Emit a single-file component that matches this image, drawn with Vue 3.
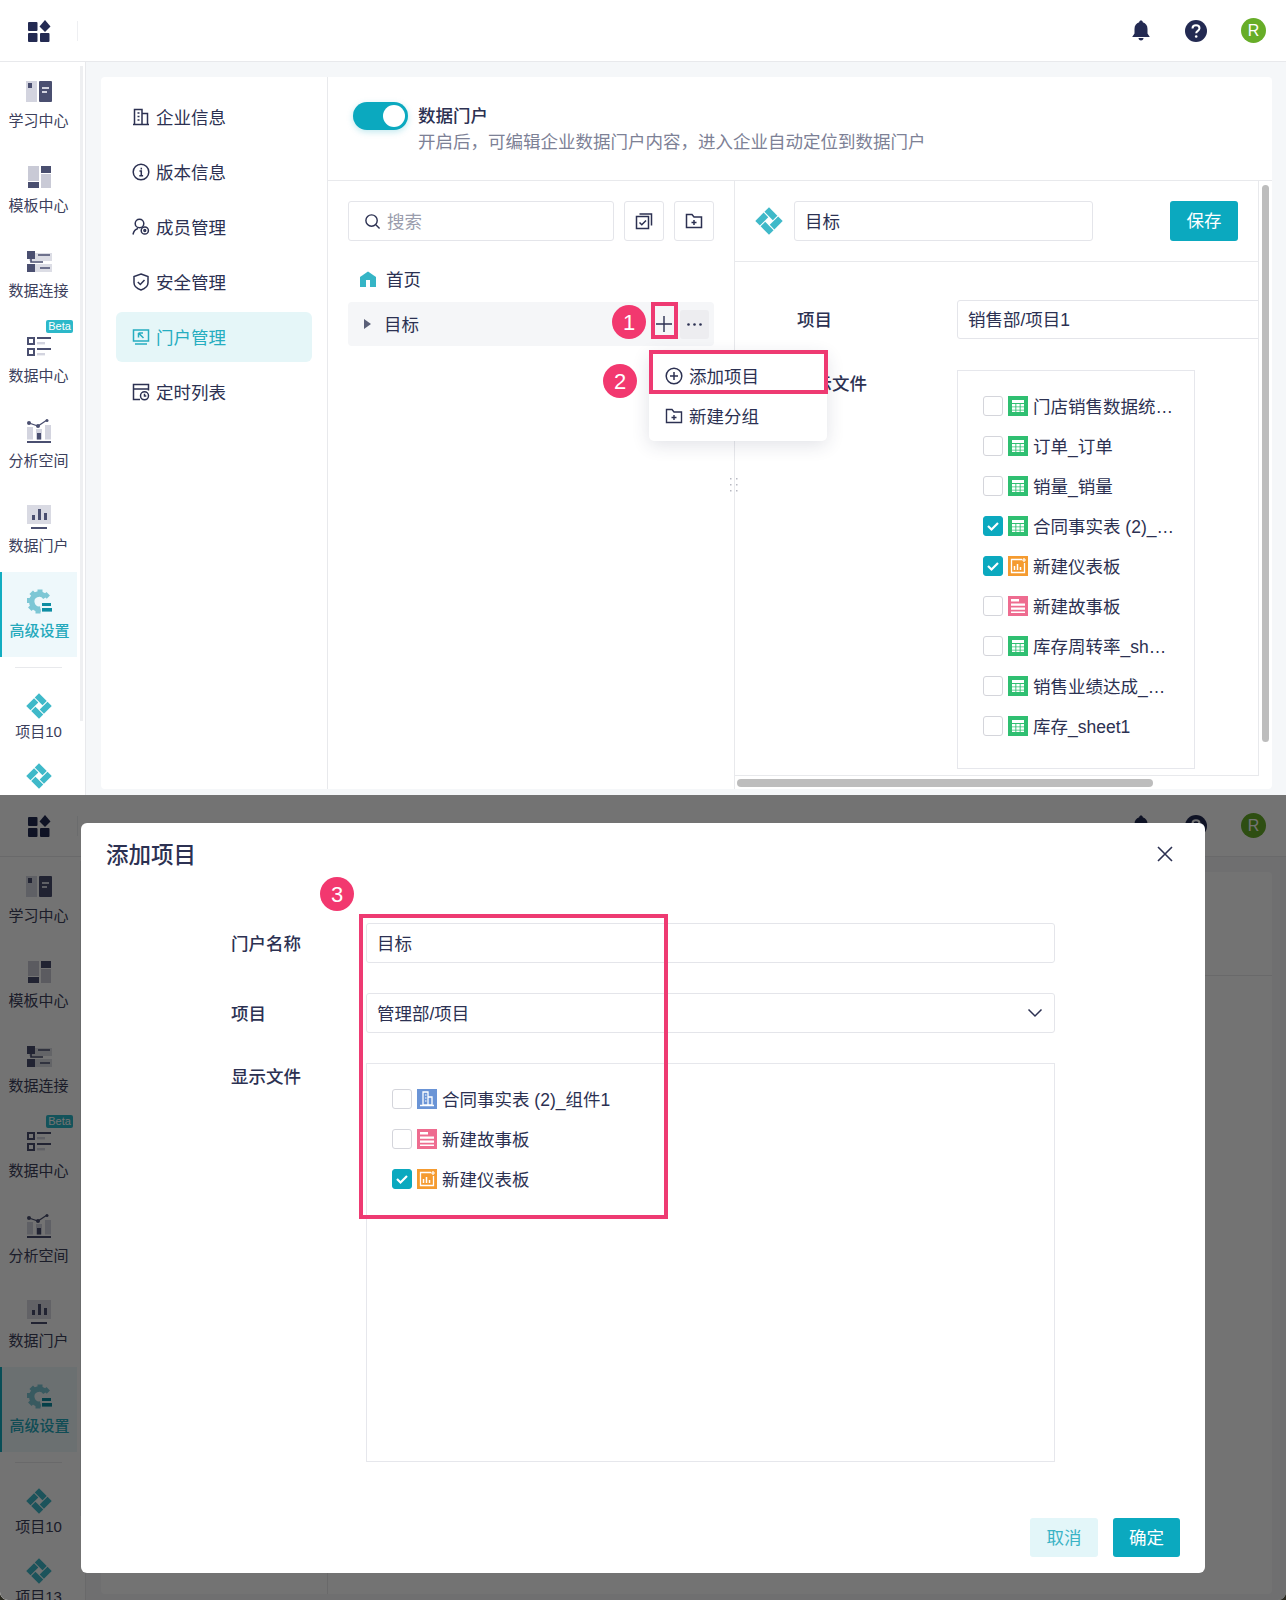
<script setup>
const shots = ["portal", "dialog"];

const diamond = `<g transform="rotate(45 13 13)" fill="currentColor"><rect x="4" y="4" width="11" height="6"/><rect x="16" y="4" width="6" height="11"/><rect x="11" y="16" width="11" height="6"/><rect x="4" y="11" width="6" height="11"/></g>`;

const gearTeeth = [0, 45, 315, 270, 225, 180]
	.map((a) => `<rect x="10.500" y="0.500" width="5" height="4.500" transform="rotate(${a} 12 12.500)"/>`)
	.join("");

const sideIcons = {
	learn: `<rect y="2" width="11" height="21" fill="#d3d4df"/><rect x="2" y="4" width="4" height="5" fill="#4a4f70"/><rect x="13" y="2" width="13" height="21" rx="1" fill="#4a4f70"/><rect x="16" y="8" width="7" height="2" fill="#d3d4df"/><rect x="16" y="12" width="5" height="2" fill="#d3d4df"/>`,
	tpl: `<rect x="2" y="2" width="11" height="15" fill="#c9cad6"/><rect x="2" y="18" width="11" height="6" fill="#4a4f70"/><rect x="15" y="2" width="10" height="7" fill="#4a4f70"/><rect x="15" y="10" width="10" height="14" fill="#c9cad6"/>`,
	conn: `<rect x="3" y="4" width="23" height="8" fill="#dcdde5"/><rect x="3" y="15" width="23" height="8" fill="#dcdde5"/><rect x="1" y="2" width="8" height="8" fill="#4a4f70"/><rect x="1" y="15" width="8" height="8" fill="#4a4f70"/><path d="M5 9v4h12M12 6h12M14 19h10" stroke="#4a4f70" stroke-width="1.600" fill="none"/>`,
	data: `<rect x="2" y="4" width="6" height="6" fill="none" stroke="#4a4f70" stroke-width="2"/><rect x="2" y="15" width="6" height="6" fill="none" stroke="#4a4f70" stroke-width="2"/><rect x="11" y="3" width="14" height="2" fill="#4a4f70"/><rect x="11" y="8" width="8" height="2.400" fill="#d3d4df"/><rect x="11" y="14" width="14" height="2" fill="#4a4f70"/><rect x="11" y="19" width="8" height="2.400" fill="#d3d4df"/>`,
	analysis: `<rect x="1" y="8" width="6" height="12.500" fill="#d3d4df"/><rect x="10" y="10" width="6" height="10.500" fill="#d3d4df"/><rect x="19" y="6" width="6" height="14.500" fill="#d3d4df"/><rect x="11" y="14" width="4" height="6.500" fill="#4a4f70"/><path d="M3 4l9 3 9-6" stroke="#4a4f70" stroke-width="1.200" fill="none"/><circle cx="3" cy="4" r="2" fill="#4a4f70"/><circle cx="12" cy="7" r="2" fill="#4a4f70"/><circle cx="21" cy="1.500" r="1.500" fill="#4a4f70"/><rect x="1" y="22" width="24" height="2" fill="#4a4f70"/>`,
	board: `<rect x="1" y="1" width="24" height="19" fill="#d9dae3"/><rect x="6" y="11" width="3" height="5" fill="#4a4f70"/><rect x="12" y="5" width="3" height="11" fill="#4a4f70"/><rect x="18" y="9" width="3" height="7" fill="#4a4f70"/><rect x="5" y="23" width="16" height="2" fill="#4a4f70"/>`,
	gear: `<g fill="#7dc7d5">${gearTeeth}</g><path d="M18.500 8.500A7.500 7.500 0 1 0 13.500 20" fill="none" stroke="#7dc7d5" stroke-width="5.500"/><rect x="15" y="14" width="9" height="3" fill="#0e8ea3"/><rect x="15" y="19" width="10" height="3.600" fill="#0e8ea3"/>`,
	project: diamond,
};

const navIcons = {
	company: `<path d="M1 16.500h16M2.500 16.500V1.500h7.500v15M10 5.500h5.500v11M5.500 5h2M5.500 8.500h2M5.500 12h2"/>`,
	info: `<circle cx="9" cy="9" r="7.800"/><path d="M7.500 8h1.800v4.800M7.300 12.800h3.800M9.300 4.800v1.600"/>`,
	member: `<circle cx="7.500" cy="5.500" r="4.300"/><path d="M1 16.500c.6-3.200 2.500-5.300 5-6"/><circle cx="12.800" cy="12.500" r="3.600"/><circle cx="12.800" cy="12.500" r=".9"/>`,
	shield: `<path d="M9 1l7 2.500v6.300c0 3.200-3.200 6-7 7.200-3.800-1.200-7-4-7-7.200V3.500z"/><path d="M5.800 9l2.500 2.500 4.200-4.500"/>`,
	portal: `<path d="M1.500 2h15v11h-15zM3 16h12M6.500 5h4.500M6.500 5v4.500M6.500 5l5 5"/>`,
	timer: `<path d="M8 16.500H1.500v-15h15v6M1.500 6h15"/><circle cx="12.500" cy="12.800" r="4"/><path d="M12.500 10.800v2.200h1.800"/>`,
};

const fileIcons = {
	sheet: { bg: "#2fbf71", svg: `<rect x="4" y="4" width="12" height="3" fill="#fff"/><path d="M4 8h3.400v2.400H4zM8.300 8h3.400v2.400H8.300zM12.600 8H16v2.400h-3.400zM4 11.300h3.400v2.400H4zM8.300 11.300h3.400v2.400H8.300zM12.600 11.300H16v2.400h-3.400zM4 14.600h3.400V16H4zM8.300 14.600h3.400V16H8.300zM12.600 14.600H16V16h-3.400z" fill="#fff"/>` },
	chart: { bg: "#f59b30", svg: `<path d="M14 3.500H3.500v13h13V7" fill="none" stroke="#fff" stroke-width="1.300"/><path d="M6.500 10v4M9.500 8v6M12.500 11v3" stroke="#fff" stroke-width="1.500"/><path d="M16 2v4M14 4h4" stroke="#fff" stroke-width="1.200"/>` },
	story: { bg: "#ee6c90", svg: `<path d="M3 3h8v2.500H3zM3 7.500h14v2.300H3zM3 11.500h14v2.300H3zM3 15.500h14V17H3z" fill="#fff"/>` },
	table: { bg: "#6a94d6", svg: `<path d="M6 3h5v13H6zM11 8h4v8h-4zM3 16.500h14" fill="none" stroke="#fff" stroke-width="1.300"/><path d="M8 6h1.500M8 9h1.500M8 12h1.500" stroke="#fff"/>` },
};

const sideItems = [
	{ label: "学习中心", icon: "learn" },
	{ label: "模板中心", icon: "tpl" },
	{ label: "数据连接", icon: "conn" },
	{ label: "数据中心", icon: "data", beta: true },
	{ label: "分析空间", icon: "analysis" },
	{ label: "数据门户", icon: "board" },
	{ label: "高级设置", icon: "gear", active: true },
];

const navItems = [
	{ label: "企业信息", icon: "company" },
	{ label: "版本信息", icon: "info" },
	{ label: "成员管理", icon: "member" },
	{ label: "安全管理", icon: "shield" },
	{ label: "门户管理", icon: "portal", active: true },
	{ label: "定时列表", icon: "timer" },
];

const portalFiles = [
	{ name: "门店销售数据统…", type: "sheet" },
	{ name: "订单_订单", type: "sheet" },
	{ name: "销量_销量", type: "sheet" },
	{ name: "合同事实表 (2)_…", type: "sheet", checked: true },
	{ name: "新建仪表板", type: "chart", checked: true },
	{ name: "新建故事板", type: "story" },
	{ name: "库存周转率_sh…", type: "sheet" },
	{ name: "销售业绩达成_…", type: "sheet" },
	{ name: "库存_sheet1", type: "sheet" },
];

const dialogFiles = [
	{ name: "合同事实表 (2)_组件1", type: "table" },
	{ name: "新建故事板", type: "story" },
	{ name: "新建仪表板", type: "chart", checked: true },
];

const fileGroups = { portal: portalFiles, dialog: dialogFiles };
</script>

<template>
	<div class="page">
		<section v-for="shot in shots" :key="shot" class="shot" :class="shot">
			<header class="topbar">
				<svg class="logo" width="24" height="24" viewBox="0 0 24 24" fill="#232a52">
					<rect x="1" y="3" width="9.500" height="9" rx="1" />
					<path d="M18 1l5.500 6.500L18 13l-5.500-5.500z" />
					<rect x="1" y="14" width="9.500" height="9" rx="1" />
					<rect x="13" y="14" width="9.500" height="9" rx="1" />
				</svg>
				<span class="top-sep"></span>
				<svg class="bell" width="22" height="24" viewBox="0 0 22 24" fill="#232a52">
					<path d="M11 1.500c1 0 1.700.7 1.800 1.700 3 .8 4.700 3.300 4.700 6.800v4.500l2.300 3.500H2.200l2.300-3.500V10c0-3.500 1.700-6 4.700-6.800.1-1 .8-1.700 1.800-1.700z" />
					<path d="M8.500 19h5c0 1.500-1 2.500-2.500 2.500S8.500 20.500 8.500 19z" />
				</svg>
				<svg class="help" width="22" height="22" viewBox="0 0 22 22">
					<circle cx="11" cy="11" r="11" fill="#232a52" />
					<path d="M7.500 8.500c0-2 1.500-3.200 3.500-3.200s3.500 1.200 3.500 3c0 2.600-3.300 2.500-3.300 5" fill="none" stroke="#fff" stroke-width="2" />
					<circle cx="11.200" cy="16.500" r="1.300" fill="#fff" />
				</svg>
				<span class="avatar">R</span>
			</header>

			<div class="body">
				<aside class="side">
					<span class="side-scroll"></span>
					<div v-for="item in sideItems" :key="item.label" class="side-item" :class="{ on: item.active }">
						<span v-if="item.beta" class="beta">Beta</span>
						<svg width="26" height="26" viewBox="0 0 26 26" v-html="sideIcons[item.icon]"></svg>
						<span>{{ item.label }}</span>
					</div>
					<div class="side-sep"></div>
					<div class="side-project">
						<svg class="teal-mark" width="26" height="26" viewBox="0 0 26 26" v-html="sideIcons.project"></svg>
						<span>项目10</span>
					</div>
					<div class="side-project">
						<svg class="teal-mark" width="26" height="26" viewBox="0 0 26 26" v-html="sideIcons.project"></svg>
						<span>项目13</span>
					</div>
				</aside>

				<main class="main">
					<div class="card">
						<nav class="nav">
							<a v-for="item in navItems" :key="item.label" class="nav-item" :class="{ on: item.active }">
								<svg class="nav-icon" width="18" height="18" viewBox="0 0 18 18" v-html="navIcons[item.icon]"></svg>
								{{ item.label }}
							</a>
						</nav>

						<div class="content">
							<div class="intro">
								<span class="toggle"><i></i></span>
								<div>
									<div class="intro-title">数据门户</div>
									<div class="intro-sub">开启后，可编辑企业数据门户内容，进入企业自动定位到数据门户</div>
								</div>
							</div>

							<div v-if="shot === 'portal'" class="split">
								<div class="tree">
									<div class="tools">
										<div class="search">
											<svg width="17" height="17" viewBox="0 0 18 18" fill="none" stroke="#2c3152" stroke-width="1.500">
												<circle cx="8" cy="8" r="6" />
												<path d="M12.500 12.500l4 4" />
											</svg>
											<span>搜索</span>
										</div>
										<button class="tool">
											<svg width="18" height="18" viewBox="0 0 18 18" fill="none" stroke="#2c3152" stroke-width="1.500">
												<path d="M1.500 4.500h12v12h-12zM4.500 2h12v11.500" />
												<path d="M4.500 10.500l2.300 2.300 4.200-4.300" />
											</svg>
										</button>
										<button class="tool">
											<svg width="18" height="18" viewBox="0 0 18 18" fill="none" stroke="#2c3152" stroke-width="1.500">
												<path d="M1.500 2.500h5.500l2 2.500h7.500v10.500h-15zM9 8v5M6.500 10.500h5" />
											</svg>
										</button>
									</div>

									<div class="home">
										<svg width="16" height="16" viewBox="0 0 16 16">
											<path d="M8 .5l8 5.500V16H0V6z" fill="#35b5c6" />
											<rect x="6" y="9" width="4" height="7" fill="#fff" />
										</svg>
										首页
									</div>

									<div class="tree-row">
										<i class="caret"></i>
										目标
										<svg class="plus" width="18" height="18" viewBox="0 0 18 18" stroke="#2c3152" stroke-width="1.400">
											<path d="M9 1v16M1 9h16" />
										</svg>
										<span class="more">
											<svg width="15" height="3" viewBox="0 0 15 3" fill="#2c3152">
												<circle cx="1.500" cy="1.500" r="1.300" />
												<circle cx="7.500" cy="1.500" r="1.300" />
												<circle cx="13.500" cy="1.500" r="1.300" />
											</svg>
										</span>
									</div>
								</div>

								<div class="pane">
									<div class="pane-head">
										<svg class="teal-mark" width="28" height="28" viewBox="0 0 26 26" v-html="sideIcons.project"></svg>
										<div class="field name">目标</div>
										<button class="primary save">保存</button>
									</div>
									<div class="pane-body">
										<div class="form-row">
											<label>项目</label>
											<div class="field wide">销售部/项目1</div>
										</div>
										<div class="form-row files">
											<label>显示文件</label>
											<div class="file-box">
												<div v-for="file in fileGroups.portal" :key="file.name" class="file">
													<span class="check" :class="{ on: file.checked }">
														<svg v-if="file.checked" width="14" height="14" viewBox="0 0 14 14" fill="none" stroke="#fff" stroke-width="2.200"><path d="M2 7l3.500 3.500L12 4" /></svg>
													</span>
													<svg class="file-icon" width="20" height="20" viewBox="0 0 20 20" :style="{ background: fileIcons[file.type].bg }" v-html="fileIcons[file.type].svg"></svg>
													{{ file.name }}
												</div>
											</div>
										</div>
									</div>
								</div>
							</div>
						</div>
					</div>
				</main>
			</div>

			<template v-if="shot === 'portal'">
				<span class="scroll-y"></span>
				<span class="scroll-x"></span>
				<svg class="drag" width="10" height="16" viewBox="0 0 10 16" fill="#b8b9c2">
					<path d="M1 1h1.500v1.500H1zM7 1h1.500v1.500H7zM1 7h1.500v1.500H1zM7 7h1.500v1.500H7zM1 13h1.500v1.500H1zM7 13h1.500v1.500H7z" />
				</svg>

				<div class="popup">
					<div class="popup-item">
						<svg width="18" height="18" viewBox="0 0 18 18" fill="none" stroke="#2c3152" stroke-width="1.500">
							<circle cx="9" cy="9" r="7.800" />
							<path d="M9 5v8M5 9h8" />
						</svg>
						添加项目
					</div>
					<div class="popup-item">
						<svg width="18" height="18" viewBox="0 0 18 18" fill="none" stroke="#2c3152" stroke-width="1.400">
							<path d="M1.500 2.500h5.500l2 2.500h7.500v10.500h-15zM9 8v5M6.500 10.500h5" />
						</svg>
						新建分组
					</div>
				</div>

				<span class="mark mark-plus"></span>
				<span class="mark mark-add"></span>
				<span class="badge badge-1">1</span>
				<span class="badge badge-2">2</span>
			</template>

			<template v-else>
				<div class="overlay"></div>
				<div class="modal">
					<div class="modal-head">
						添加项目
						<svg width="16" height="16" viewBox="0 0 16 16" stroke="#2c3152" stroke-width="1.600">
							<path d="M1 1l14 14M15 1L1 15" />
						</svg>
					</div>
					<div class="modal-form">
						<div class="modal-row">
							<label>门户名称</label>
							<div class="field grow">目标</div>
						</div>
						<div class="modal-row">
							<label>项目</label>
							<div class="field grow select">
								管理部/项目
								<svg width="16" height="10" viewBox="0 0 16 10" fill="none" stroke="#2c3152" stroke-width="1.500">
									<path d="M1.500 1.500L8 8l6.500-6.500" />
								</svg>
							</div>
						</div>
						<div class="modal-row top">
							<label>显示文件</label>
							<div class="file-box big">
								<div v-for="file in fileGroups.dialog" :key="file.name" class="file">
									<span class="check" :class="{ on: file.checked }">
										<svg v-if="file.checked" width="14" height="14" viewBox="0 0 14 14" fill="none" stroke="#fff" stroke-width="2.200"><path d="M2 7l3.500 3.500L12 4" /></svg>
									</span>
									<svg class="file-icon" width="20" height="20" viewBox="0 0 20 20" :style="{ background: fileIcons[file.type].bg }" v-html="fileIcons[file.type].svg"></svg>
									{{ file.name }}
								</div>
							</div>
						</div>
					</div>
					<div class="modal-foot">
						<button class="ghost">取消</button>
						<button class="primary">确定</button>
					</div>
				</div>
				<span class="mark mark-form"></span>
				<span class="badge badge-3">3</span>
			</template>
		</section>
	</div>
</template>

<style>
body {
	background: #fff;
}
</style>

<style scoped>
.page {
	width: 1286px;
	height: 1600px;
	background: #2b2a20;
	font-family: "Liberation Sans", "Noto Sans CJK SC", sans-serif;
	color: #2c3152;
	font-size: 17.500px;
	line-height: 1;
}

.shot {
	position: relative;
	overflow: hidden;
	background: #f5f7f9;
	display: flex;
	flex-direction: column;
}

.portal {
	height: 795px;
}

.dialog {
	height: 805px;
	border-radius: 0 0 8px 8px;
}

.topbar {
	height: 61px;
	flex: none;
	display: flex;
	align-items: center;
	padding-left: 27px;
	background: #fff;
	border-bottom: 1px solid #e8e9ec;
}

.top-sep {
	width: 1px;
	height: 20px;
	margin-left: 26px;
	background: #eeeff2;
}

.bell {
	margin-left: auto;
}

.help {
	margin-left: 33px;
}

.avatar {
	width: 25px;
	height: 25px;
	margin: 0 20px 0 34px;
	border-radius: 50%;
	background: #67ad28;
	color: #fff;
	font-size: 16px;
	display: flex;
	align-items: center;
	justify-content: center;
}

.body {
	flex: 1;
	min-height: 0;
	display: flex;
}

.side {
	position: relative;
	flex: none;
	width: 86px;
	height: 760px;
	background: #fff;
	border-right: 1px solid #e8e9ec;
	box-sizing: border-box;
}

.side-scroll {
	position: absolute;
	left: 80px;
	top: 4px;
	width: 3px;
	height: 655px;
	background: #eeeff1;
}

.side-item {
	position: relative;
	width: 77px;
	height: 85px;
	padding-top: 17px;
	box-sizing: border-box;
	display: flex;
	flex-direction: column;
	align-items: center;
	gap: 4px;
	font-size: 15px;
	line-height: 24px;
	color: #3c405c;
}

.side-item.on {
	background: #eef8fb;
	border-left: 2px solid #12adc1;
	color: #25a9bc;
	font-weight: 500;
}

.beta {
	position: absolute;
	left: 46px;
	top: 3px;
	height: 13px;
	width: 27px;
	border-radius: 2px;
	background: #2cb8c9;
	color: #fff;
	font-size: 11px;
	line-height: 13px;
	text-align: center;
}

.side-sep {
	width: 47px;
	height: 1px;
	margin: 10px 0 0 15px;
	background: #e8e9ec;
}

.side-project {
	width: 77px;
	height: 70px;
	padding-top: 25px;
	box-sizing: border-box;
	display: flex;
	flex-direction: column;
	align-items: center;
	gap: 1.500px;
	font-size: 15px;
	line-height: 22px;
	color: #3c405c;
}

.teal-mark {
	color: #3fb9c9;
	flex: none;
}

.main {
	flex: 1;
	min-width: 0;
	padding: 15px 14px 6px 15px;
	display: flex;
}

.card {
	flex: 1;
	min-width: 0;
	display: flex;
	background: #fff;
	border-radius: 4px;
}

.nav {
	flex: none;
	width: 196px;
	padding: 15px;
	border-right: 1px solid #e8e9ec;
	display: flex;
	flex-direction: column;
	gap: 5px;
}

.nav-item {
	height: 50px;
	padding: 3px 0 0 16px;
	box-sizing: border-box;
	border-radius: 6px;
	display: flex;
	align-items: center;
	gap: 6px;
}

.nav-item.on {
	background: #e5f6f8;
	color: #26adc0;
}

.nav-icon {
	margin-top: -3px;
	fill: none;
	stroke: currentColor;
	stroke-width: 1.500;
}

.content {
	flex: 1;
	min-width: 0;
	display: flex;
	flex-direction: column;
}

.intro {
	flex: none;
	height: 103px;
	padding-left: 25px;
	border-bottom: 1px solid #e8e9ec;
	display: flex;
	align-items: flex-start;
	gap: 10px;
}

.toggle {
	position: relative;
	width: 55px;
	height: 28px;
	margin-top: 25px;
	border-radius: 14px;
	background: #0ba9bf;
	box-shadow: 0 2px 6px rgba(11, 169, 191, 0.25);
}

.toggle i {
	position: absolute;
	right: 3px;
	top: 3px;
	width: 22px;
	height: 22px;
	border-radius: 50%;
	background: #fff;
}

.intro-title {
	margin-top: 26px;
	line-height: 26px;
	font-weight: 500;
}

.intro-sub {
	line-height: 26px;
	color: #7d8196;
}

.split {
	flex: 1;
	min-height: 0;
	display: flex;
}

.tree {
	flex: none;
	width: 366px;
	padding: 20px 20px 0;
	border-right: 1px solid #e8e9ec;
}

.tools {
	display: flex;
	gap: 10px;
}

.search {
	flex: 1;
	height: 40px;
	padding: 3px 0 0 15px;
	box-sizing: border-box;
	border: 1px solid #e4e5ea;
	border-radius: 3px;
	display: flex;
	align-items: center;
	gap: 6px;
	color: #9a9dad;
}

.search svg {
	margin-top: -3px;
}

.tool {
	width: 40px;
	height: 40px;
	padding: 0;
	background: #fff;
	border: 1px solid #e4e5ea;
	border-radius: 3px;
	display: flex;
	align-items: center;
	justify-content: center;
}

.home {
	height: 40px;
	margin: 18px 0 3px;
	padding: 3px 0 0 12px;
	box-sizing: border-box;
	display: flex;
	align-items: center;
	gap: 10px;
}

.home svg {
	margin-top: -3px;
}

.tree-row {
	height: 44px;
	padding: 3px 5px 0 16px;
	box-sizing: border-box;
	background: #f5f6f8;
	border-radius: 4px;
	display: flex;
	align-items: center;
}

.caret {
	width: 0;
	height: 0;
	margin: -3px 13px 0 0;
	border-left: 7px solid #5b6078;
	border-top: 5px solid transparent;
	border-bottom: 5px solid transparent;
}

.plus {
	margin: -3px 7px 0 auto;
}

.more {
	width: 29px;
	height: 29px;
	margin-top: -3px;
	background: #ededf0;
	border-radius: 3px;
	display: flex;
	align-items: center;
	justify-content: center;
}

.pane {
	flex: none;
	width: 523px;
	margin-bottom: 13px;
	border-right: 1px solid #e8e9ec;
	border-bottom: 1px solid #e8e9ec;
	overflow: hidden;
}

.pane-head {
	height: 80px;
	padding: 0 20px;
	border-bottom: 1px solid #e8e9ec;
	display: flex;
	align-items: center;
	gap: 11px;
}

.field {
	height: 40px;
	padding: 3px 0 0 10px;
	box-sizing: border-box;
	border: 1px solid #e4e5ea;
	border-radius: 3px;
	display: flex;
	align-items: center;
	background: #fff;
}

.name {
	width: 299px;
}

.primary {
	width: 67px;
	height: 39px;
	padding: 2px 0 0;
	border: 0;
	border-radius: 3px;
	background: #0ba9bf;
	color: #fff;
	font: inherit;
}

.save {
	margin-left: auto;
	width: 68px;
	height: 40px;
}

.pane-body {
	padding-top: 38px;
}

.form-row {
	display: flex;
	align-items: center;
	padding-left: 62px;
}

.form-row label {
	flex: none;
	width: 160px;
	padding-top: 3px;
	font-weight: 500;
}

.wide {
	flex: none;
	width: 320px;
	height: 39px;
}

.files {
	margin-top: 31px;
	align-items: flex-start;
}

.form-row.files label,
.modal-row.top label {
	margin-top: 1px;
	padding-top: 0;
	line-height: 26px;
}

.file-box {
	width: 238px;
	height: 399px;
	padding: 15px 0 0 25px;
	box-sizing: border-box;
	border: 1px solid #e6e7ec;
}

.file-box.big {
	width: 689px;
	height: 399px;
}

.file {
	height: 40px;
	padding-top: 3px;
	box-sizing: border-box;
	display: flex;
	align-items: center;
	gap: 5px;
	white-space: nowrap;
}

.check {
	flex: none;
	width: 20px;
	height: 20px;
	margin-top: -3px;
	box-sizing: border-box;
	border: 1px solid #d4d5db;
	border-radius: 3px;
	display: flex;
	align-items: center;
	justify-content: center;
}

.check.on {
	background: #0ba9bf;
	border-color: #0ba9bf;
}

.file-icon {
	flex: none;
	margin-top: -3px;
}

.scroll-y {
	position: absolute;
	left: 1262px;
	top: 185px;
	width: 7px;
	height: 557px;
	border-radius: 4px;
	background: #bdbdbd;
}

.scroll-x {
	position: absolute;
	left: 737px;
	top: 779px;
	width: 416px;
	height: 8px;
	border-radius: 4px;
	background: #bdbdbd;
}

.drag {
	position: absolute;
	left: 729px;
	top: 477px;
}

.popup {
	position: absolute;
	left: 649px;
	top: 352px;
	width: 178px;
	height: 89px;
	padding-top: 4px;
	box-sizing: border-box;
	background: #fff;
	border-radius: 5px;
	box-shadow: 0 4px 18px rgba(44, 49, 82, 0.14);
}

.popup-item {
	height: 40px;
	padding: 3px 0 0 16px;
	box-sizing: border-box;
	display: flex;
	align-items: center;
	gap: 6px;
}

.popup-item svg {
	margin-top: -3px;
}

.mark {
	position: absolute;
	box-sizing: border-box;
	border: 4px solid #ee3a72;
}

.mark-plus {
	left: 651px;
	top: 302px;
	width: 27px;
	height: 37px;
}

.mark-add {
	left: 649px;
	top: 350px;
	width: 179px;
	height: 44px;
}

.mark-form {
	left: 359px;
	top: 119px;
	width: 309px;
	height: 305px;
}

.badge {
	position: absolute;
	width: 34px;
	height: 34px;
	padding-top: 2px;
	box-sizing: border-box;
	border-radius: 50%;
	background: #f2386f;
	color: #fff;
	font-size: 22px;
	display: flex;
	align-items: center;
	justify-content: center;
}

.badge-1 {
	left: 612px;
	top: 305px;
}

.badge-2 {
	left: 603px;
	top: 364px;
}

.badge-3 {
	left: 320px;
	top: 82px;
}

.overlay {
	position: absolute;
	inset: 0;
	background: rgba(0, 0, 0, 0.55);
}

.modal {
	position: absolute;
	left: 81px;
	top: 28px;
	width: 1124px;
	height: 750px;
	background: #fff;
	border-radius: 6px;
	display: flex;
	flex-direction: column;
}

.modal-head {
	height: 62px;
	padding: 4px 32px 0 25px;
	box-sizing: border-box;
	display: flex;
	align-items: center;
	justify-content: space-between;
	font-size: 22.500px;
	font-weight: 500;
}

.modal-head svg {
	margin-top: -4px;
}

.modal-form {
	padding: 38px 0 0 150px;
	display: flex;
	flex-direction: column;
	gap: 30px;
}

.modal-row {
	display: flex;
	align-items: center;
}

.modal-row.top {
	align-items: flex-start;
}

.modal-row label {
	flex: none;
	width: 135px;
	padding-top: 3px;
	font-weight: 500;
}

.grow {
	width: 689px;
}

.select {
	justify-content: space-between;
	padding-right: 11px;
}

.select svg {
	margin-top: -3px;
}

.modal-foot {
	margin-top: auto;
	padding: 0 25px 16px 0;
	display: flex;
	justify-content: flex-end;
	gap: 15px;
}

.ghost {
	width: 68px;
	height: 39px;
	padding: 2px 0 0;
	border: 0;
	border-radius: 3px;
	background: #e3f6f9;
	color: #3ab3c5;
	font: inherit;
}
</style>
